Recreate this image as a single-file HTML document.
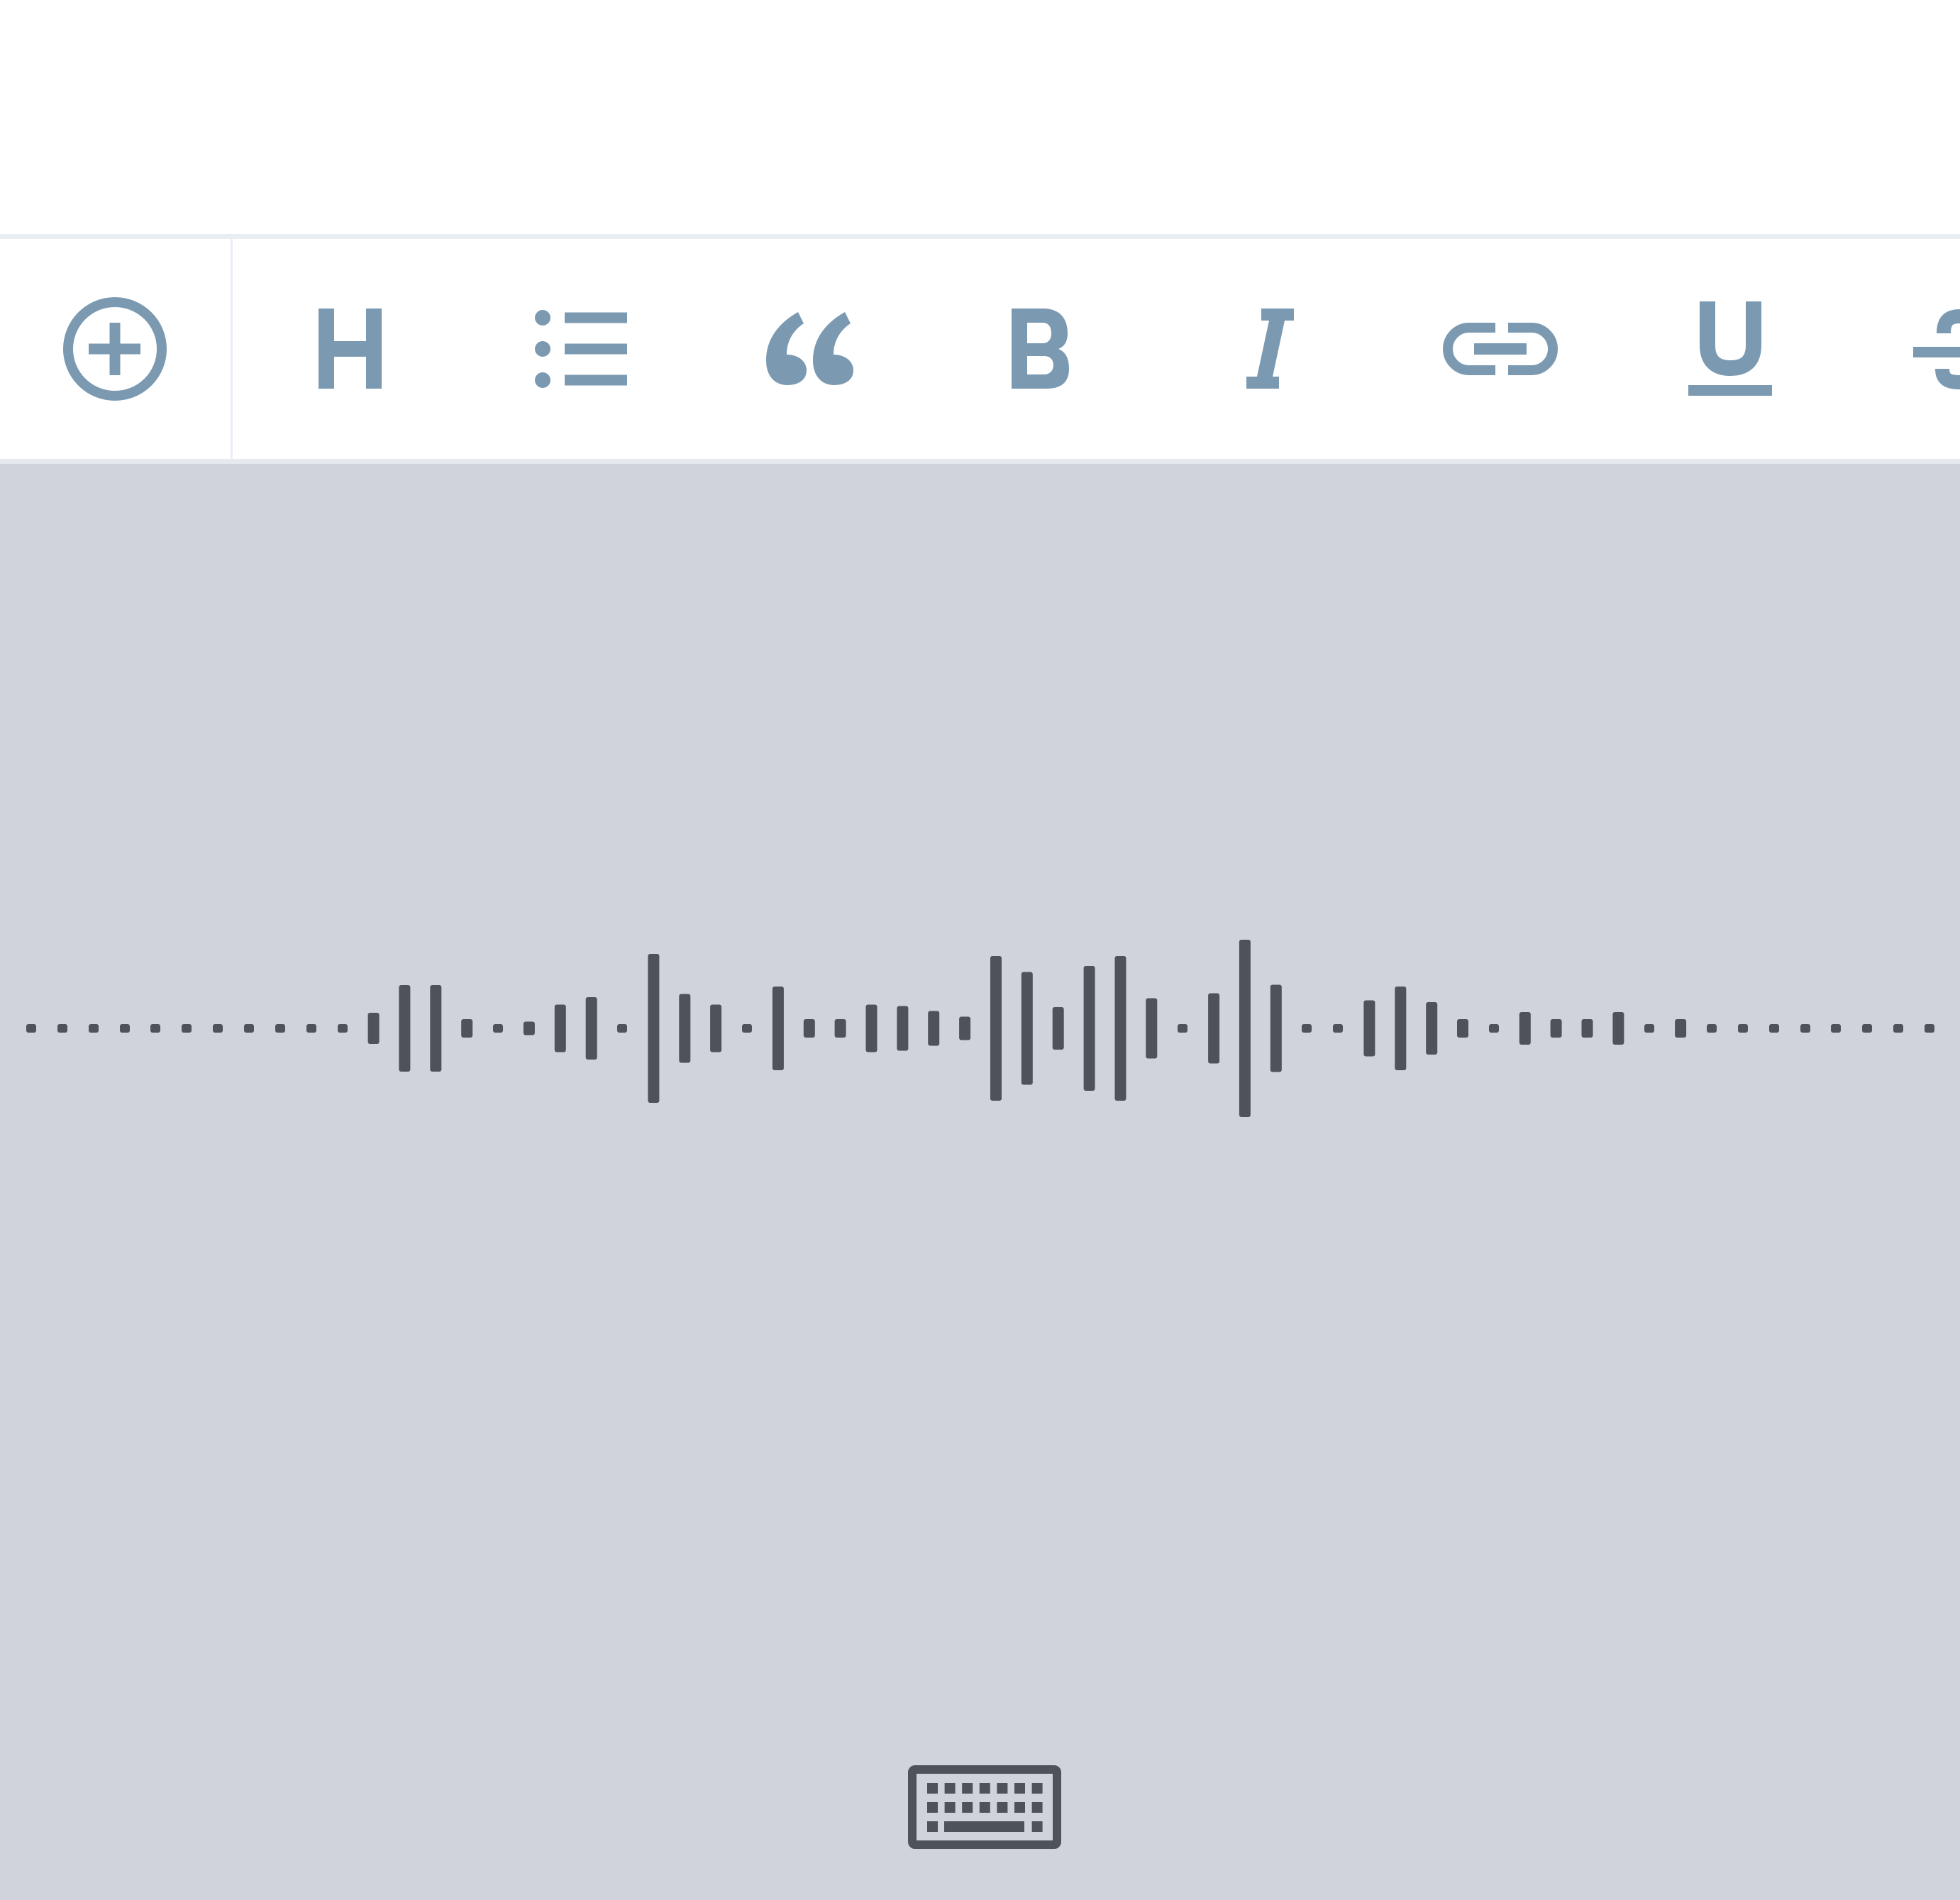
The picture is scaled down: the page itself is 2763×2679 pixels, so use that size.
<!DOCTYPE html>
<html><head><meta charset="utf-8"><style>
html,body{margin:0;padding:0;background:#fff;}
body{width:2763px;height:2679px;overflow:hidden;font-family:"Liberation Sans",sans-serif;}
svg{display:block}
</style></head><body>
<svg width="2763" height="2679" viewBox="0 0 2763 2679" xmlns="http://www.w3.org/2000/svg">
<rect x="0" y="0" width="2763" height="2679" fill="#ffffff"/>
<!-- toolbar borders -->
<rect x="0" y="330" width="2763" height="7" fill="#e9eef3"/>
<rect x="0" y="647" width="2763" height="7" fill="#e6e9ed"/>
<rect x="325" y="337" width="3" height="310" fill="#e9eef3"/>
<!-- gray area -->
<rect x="0" y="654" width="2763" height="2025" fill="#d0d3db"/>

<g fill="#7b9ab2">
  <!-- plus circle -->
  <circle cx="162" cy="492" r="66" fill="none" stroke="#7b9ab2" stroke-width="14"/>
  <rect x="125" y="484.5" width="73" height="15"/>
  <rect x="154.5" y="455" width="15" height="74"/>
  <!-- H -->
  <rect x="449" y="435" width="22" height="113"/>
  <rect x="516" y="435" width="22" height="113"/>
  <rect x="471" y="481" width="45" height="22"/>
  <!-- list -->
  <circle cx="765" cy="448" r="11"/><circle cx="765" cy="492" r="11"/><circle cx="765" cy="536" r="11"/>
  <rect x="796" y="440.5" width="88" height="15"/>
  <rect x="796" y="484.5" width="88" height="15"/>
  <rect x="796" y="528.5" width="88" height="15"/>
  <!-- quote -->
  <path d="M1125,440 L1133,456 C1115,468 1109,485 1109,500 C1126,500 1137,510 1137,522 C1137,536 1125,543 1110,543 C1092,543 1080,530 1080,508 C1080,478 1098,455 1125,440 Z"/>
  <path d="M1191,440 L1199,456 C1181,468 1175,485 1175,500 C1192,500 1203,510 1203,522 C1203,536 1191,543 1176,543 C1158,543 1146,530 1146,508 C1146,478 1164,455 1191,440 Z"/>
  <!-- B -->
  <path fill-rule="evenodd" d="M1426,435 H1470 C1495,435 1505,450 1505,470 C1505,482 1500,489 1492,492 C1502,496 1507,505 1507,520 C1507,540 1495,548 1475,548 H1426 Z M1448,455 V484 H1470 C1478,484 1482,478 1482,470 C1482,461 1478,455 1470,455 Z M1448,502 V528 H1472 C1480,528 1485,522 1485,515 C1485,507 1480,502 1472,502 Z"/>
  <!-- I -->
  <rect x="1778" y="435" width="46" height="17"/>
  <rect x="1757" y="531" width="46" height="17"/>
  <path d="M1789,452 L1811,452 L1794,531 L1772,531 Z"/>
  <!-- link -->
  <path d="M2108,462 H2071 A30,30 0 0 0 2071,522 H2108" fill="none" stroke="#7b9ab2" stroke-width="14"/>
  <path d="M2126,462 H2159 A30,30 0 0 1 2159,522 H2126" fill="none" stroke="#7b9ab2" stroke-width="14"/>
  <rect x="2078" y="484" width="74" height="16"/>
  <!-- U -->
  <path d="M2407,425 V487 C2407,510 2420,519 2439.5,519 C2459,519 2472,510 2472,487 V425" fill="none" stroke="#7b9ab2" stroke-width="22"/>
  <rect x="2380" y="543" width="118" height="15"/>
  <!-- strikethrough partial -->
  <rect x="2697" y="489" width="66" height="15"/>
  <path d="M2763,446 C2746,446 2740,453 2740,470" fill="none" stroke="#7b9ab2" stroke-width="20"/>
  <path d="M2738,520 C2738,536 2748,539 2763,539" fill="none" stroke="#7b9ab2" stroke-width="20"/>
</g>

<!-- waveform -->
<g fill="#4e525a">
  <!-- dots -->
  <rect x="37" y="1444" width="14" height="12" rx="3"/>
  <rect x="81" y="1444" width="14" height="12" rx="3"/>
  <rect x="125" y="1444" width="14" height="12" rx="3"/>
  <rect x="169" y="1444" width="14" height="12" rx="3"/>
  <rect x="212" y="1444" width="14" height="12" rx="3"/>
  <rect x="256" y="1444" width="14" height="12" rx="3"/>
  <rect x="300" y="1444" width="14" height="12" rx="3"/>
  <rect x="344" y="1444" width="14" height="12" rx="3"/>
  <rect x="388" y="1444" width="14" height="12" rx="3"/>
  <rect x="432" y="1444" width="14" height="12" rx="3"/>
  <rect x="476" y="1444" width="14" height="12" rx="3"/>
  <rect x="695" y="1444" width="14" height="12" rx="3"/>
  <rect x="870" y="1444" width="14" height="12" rx="3"/>
  <rect x="1046" y="1444" width="14" height="12" rx="3"/>
  <rect x="1660" y="1444" width="14" height="12" rx="3"/>
  <rect x="1835" y="1444" width="14" height="12" rx="3"/>
  <rect x="1879" y="1444" width="14" height="12" rx="3"/>
  <rect x="2099" y="1444" width="14" height="12" rx="3"/>
  <rect x="2318" y="1444" width="14" height="12" rx="3"/>
  <rect x="2406" y="1444" width="14" height="12" rx="3"/>
  <rect x="2450" y="1444" width="14" height="12" rx="3"/>
  <rect x="2494" y="1444" width="14" height="12" rx="3"/>
  <rect x="2538" y="1444" width="14" height="12" rx="3"/>
  <rect x="2581" y="1444" width="14" height="12" rx="3"/>
  <rect x="2625" y="1444" width="14" height="12" rx="3"/>
  <rect x="2669" y="1444" width="14" height="12" rx="3"/>
  <rect x="2713" y="1444" width="14" height="12" rx="3"/>
  <!-- bars -->
  <rect x="518.6" y="1428" width="16" height="44" rx="3"/>
  <rect x="562.4" y="1389" width="16" height="122" rx="3"/>
  <rect x="606.3" y="1389" width="16" height="122" rx="3"/>
  <rect x="650.2" y="1437" width="16" height="26" rx="3"/>
  <rect x="737.9" y="1440.5" width="16" height="19" rx="3"/>
  <rect x="781.8" y="1416.5" width="16" height="67" rx="3"/>
  <rect x="825.7" y="1406" width="16" height="88" rx="3"/>
  <rect x="913.4" y="1345" width="16" height="210" rx="3"/>
  <rect x="957.3" y="1401.5" width="16" height="97" rx="3"/>
  <rect x="1001.1" y="1416.5" width="16" height="67" rx="3"/>
  <rect x="1088.9" y="1391" width="16" height="118" rx="3"/>
  <rect x="1132.8" y="1437" width="16" height="26" rx="3"/>
  <rect x="1176.6" y="1437" width="16" height="26" rx="3"/>
  <rect x="1220.5" y="1416.5" width="16" height="67" rx="3"/>
  <rect x="1264.4" y="1418.5" width="16" height="63" rx="3"/>
  <rect x="1308.2" y="1425.5" width="16" height="49" rx="3"/>
  <rect x="1352.1" y="1433.5" width="16" height="33" rx="3"/>
  <rect x="1396" y="1348" width="16" height="204" rx="3"/>
  <rect x="1439.8" y="1370.5" width="16" height="159" rx="3"/>
  <rect x="1483.7" y="1420" width="16" height="60" rx="3"/>
  <rect x="1527.6" y="1362" width="16" height="176" rx="3"/>
  <rect x="1571.5" y="1348" width="16" height="204" rx="3"/>
  <rect x="1615.3" y="1407.5" width="16" height="85" rx="3"/>
  <rect x="1703.1" y="1400.5" width="16" height="99" rx="3"/>
  <rect x="1746.9" y="1325" width="16" height="250" rx="3"/>
  <rect x="1790.8" y="1388.5" width="16" height="123" rx="3"/>
  <rect x="1922.4" y="1410.5" width="16" height="79" rx="3"/>
  <rect x="1966.3" y="1391" width="16" height="118" rx="3"/>
  <rect x="2010.2" y="1413" width="16" height="74" rx="3"/>
  <rect x="2054" y="1437" width="16" height="26" rx="3"/>
  <rect x="2141.8" y="1427" width="16" height="46" rx="3"/>
  <rect x="2185.6" y="1437" width="16" height="26" rx="3"/>
  <rect x="2229.5" y="1437" width="16" height="26" rx="3"/>
  <rect x="2273.4" y="1427" width="16" height="46" rx="3"/>
  <rect x="2361.1" y="1437" width="16" height="26" rx="3"/>
</g>

<!-- keyboard -->
<g fill="#4e525a">
  <rect x="1286" y="2495" width="204" height="106" rx="4" fill="none" stroke="#4e525a" stroke-width="12"/>
  <rect x="1307" y="2514" width="15" height="15"/><rect x="1331.6" y="2514" width="15" height="15"/><rect x="1356.2" y="2514" width="15" height="15"/><rect x="1380.8" y="2514" width="15" height="15"/><rect x="1405.4" y="2514" width="15" height="15"/><rect x="1430" y="2514" width="15" height="15"/><rect x="1454.6" y="2514" width="15" height="15"/>
  <rect x="1307" y="2541" width="15" height="15"/><rect x="1331.6" y="2541" width="15" height="15"/><rect x="1356.2" y="2541" width="15" height="15"/><rect x="1380.8" y="2541" width="15" height="15"/><rect x="1405.4" y="2541" width="15" height="15"/><rect x="1430" y="2541" width="15" height="15"/><rect x="1454.6" y="2541" width="15" height="15"/>
  <rect x="1307" y="2568" width="15" height="15"/><rect x="1331" y="2568" width="113" height="15"/><rect x="1454.6" y="2568" width="15" height="15"/>
</g>
</svg>
</body></html>
